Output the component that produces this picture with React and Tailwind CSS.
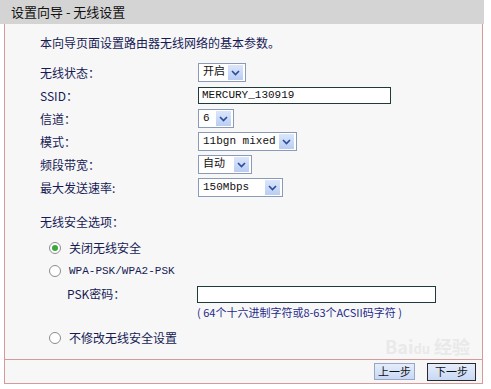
const font = { fontFamily: '"Noto Sans CJK SC", "DejaVu Sans", sans-serif' }

const Chevron = () => (
  <svg width="9" height="6" viewBox="0 0 9 6">
    <path d="M1 1 L4.5 4.5 L8 1" fill="none" stroke="#2b4a9a" strokeWidth="1.6" />
  </svg>
)

const Select = ({ value, w }) => (
  <div
    className="flex h-[19px] items-center justify-between border border-[#8a9bb8] bg-white pl-[4px] pr-[2px] text-[11px] text-[#111]"
    style={{ width: w }}
  >
    <span className="whitespace-nowrap font-['Liberation_Mono','Noto_Sans_CJK_SC',monospace] leading-[15px]">
      {value}
    </span>
    <span className="flex h-[15px] w-[15px] shrink-0 items-center justify-center bg-gradient-to-b from-[#dbe6fb] to-[#b9cdf3]">
      <Chevron />
    </span>
  </div>
)

const Radio = ({ checked }) => (
  <span className="flex h-[12px] w-[12px] items-center justify-center rounded-full border border-[#8c8c8c] bg-white">
    {checked && <span className="h-[6px] w-[6px] rounded-full bg-[#3aa83a]" />}
  </span>
)

const Row = ({ label, children }) => (
  <div className="flex h-[23px] items-center">
    <div className="w-[158px] text-[12px]">{label}</div>
    {children}
  </div>
)

export default function App() {
  return (
    <div className="relative h-[389px] w-[491px] bg-white text-[#161a55]" style={font}>
      <div className="flex h-[24px] w-[484px] items-center bg-[#d4d4d4] pl-[11px] text-[13px] text-[#111]">
        设置向导 - 无线设置
      </div>
      <div className="ml-[4px] h-[335px] w-[479px] border-x border-[#d69a9a] bg-[#f7f7f7] pl-[35px] pt-[12px]">
        <div className="flex h-[14px] items-center text-[12px]">本向导页面设置路由器无线网络的基本参数。</div>
        <div className="mt-[11px]">
          <Row label="无线状态：">
            <Select value="开启" w="48px" />
          </Row>
          <Row label="SSID：">
            <div className="flex h-[17px] w-[193px] items-center border border-[#1f3a38] bg-white pl-[3px] font-['Liberation_Mono',monospace] text-[11px] text-[#111]">
              MERCURY_130919
            </div>
          </Row>
          <Row label="信道：">
            <Select value="6" w="36px" />
          </Row>
          <Row label="模式：">
            <Select value="11bgn mixed" w="99px" />
          </Row>
          <Row label="频段带宽：">
            <Select value="自动" w="54px" />
          </Row>
          <Row label="最大发送速率:">
            <Select value="150Mbps" w="85px" />
          </Row>
        </div>
        <div className="mt-[12px] flex h-[22px] items-center text-[12px]">无线安全选项：</div>
        <div className="mt-[4px] flex h-[22px] items-center gap-[8px] pl-[9px] text-[12px]">
          <Radio checked />
          <span>关闭无线安全</span>
        </div>
        <div className="mt-[1px] flex h-[22px] items-center gap-[8px] pl-[9px] text-[11px]">
          <Radio />
          <span className="font-['Liberation_Mono',monospace]">WPA-PSK/WPA2-PSK</span>
        </div>
        <div className="mt-[1px] flex h-[22px] items-center">
          <div className="w-[157px] pl-[27px] text-[12px]">PSK密码：</div>
          <div className="h-[17px] w-[239px] border border-[#1f3a38] bg-white" />
        </div>
        <div className="flex h-[15px] items-center pl-[157px] text-[11px] text-[#1f2a8a]">
          ( 64个十六进制字符或8-63个ACSII码字符 )
        </div>
        <div className="mt-[7px] flex h-[22px] items-center gap-[8px] pl-[9px] text-[12px]">
          <Radio />
          <span>不修改无线安全设置</span>
        </div>
      </div>
      <div className="ml-[4px] flex h-[25px] w-[479px] items-center justify-end gap-[12px] border border-[#d69a9a] bg-[#f7f7f7] pr-[6px]">
        <button className="h-[17px] w-[41px] border border-[#9aa6c4] bg-gradient-to-b from-[#e4edfb] to-[#c8d9f5] text-[11px] leading-none text-[#111]">
          上一步
        </button>
        <button className="h-[18px] w-[49px] border border-[#2a2a2a] bg-gradient-to-b from-[#e4edfb] to-[#c8d9f5] text-[11px] leading-none text-[#111]">
          下一步
        </button>
      </div>
      <div className="pointer-events-none absolute left-[385px] top-[333px] text-[18px] font-bold text-[#e9e9e9]">
        Bai<span className="text-[13px]">du</span> 经验
      </div>
    </div>
  )
}
